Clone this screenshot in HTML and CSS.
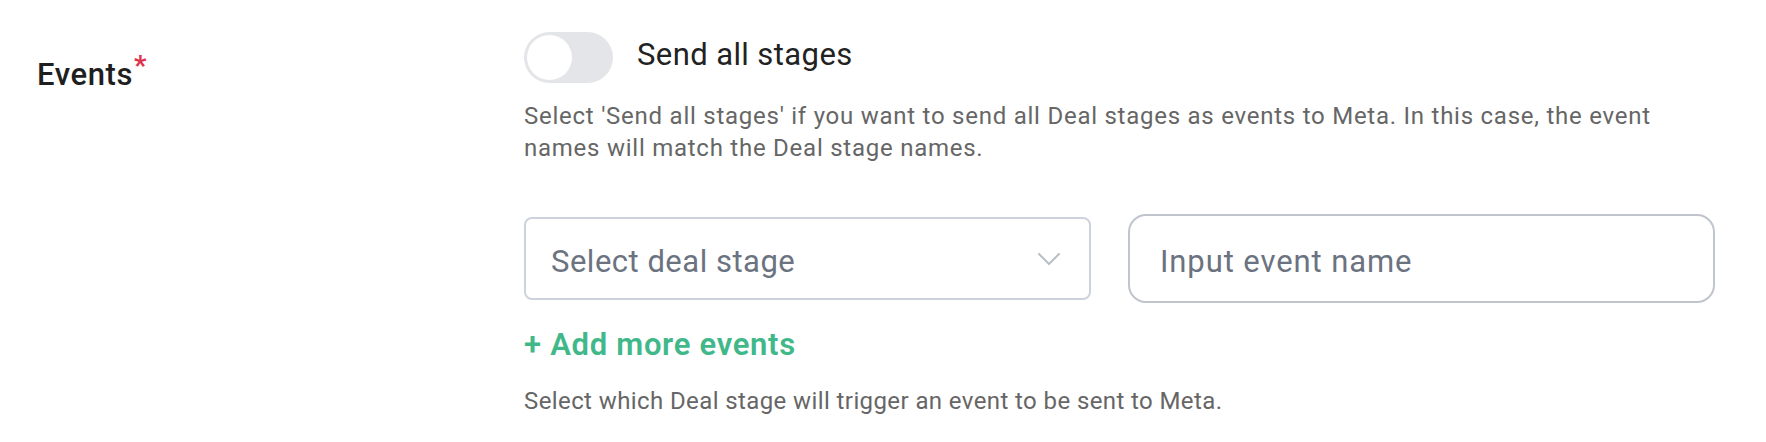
FILE: index.html
```html
<!DOCTYPE html>
<html lang="en">
<head>
    <meta charset="UTF-8">
    <meta name="viewport" content="width=device-width, initial-scale=1.0">
    <title>Events</title>
    <link rel="stylesheet" href="styles.css">
</head>
<body>
    <div class="field-row">
        <div class="field-label">
            Events<span class="required">*</span>
        </div>

        <div class="field-body">
            <label class="toggle-row">
                <span class="toggle"><span class="toggle-knob"></span></span>
                <span class="toggle-text">Send all stages</span>
            </label>

            <p class="help-text">
                Select 'Send all stages' if you want to send all Deal stages as events to Meta. In this case, the event names will match the Deal stage names.
            </p>

            <div class="event-row">
                <div class="select-box">
                    <span class="select-placeholder">Select deal stage</span>
                    <svg class="chevron" width="22" height="12" viewBox="0 0 22 12">
                        <polyline points="1,1 11,11 21,1" fill="none" stroke="#b9bfc7" stroke-width="2" stroke-linecap="round" stroke-linejoin="round"/>
                    </svg>
                </div>
                <input class="event-input" type="text" placeholder="Input event name">
            </div>

            <a class="add-more" href="#">+ Add more events</a>

            <p class="help-text bottom">Select which Deal stage will trigger an event to be sent to Meta.</p>
        </div>
    </div>
</body>
</html>
```

FILE: styles.css
```css
* {
    margin: 0;
    padding: 0;
    box-sizing: border-box;
}

body {
    font-family: Roboto, 'Noto Sans', Arial, sans-serif;
    background: #ffffff;
    color: #222222;
}

.field-row {
    display: flex;
    padding: 32px 0 0 37px;
}

.field-label {
    width: 487px;
    padding-top: 14px;
    font-size: 31px;
    line-height: 40px;
    font-weight: 500;
    letter-spacing: 0.6px;
    color: #1f1f1f;
}

.required {
    color: #e0304a;
    font-size: 28px;
    font-weight: 600;
    vertical-align: 10px;
    margin-left: 1px;
}

.field-body {
    width: 1191px;
}

.toggle-row {
    display: flex;
    align-items: center;
    gap: 24px;
    height: 51px;
}

.toggle {
    display: flex;
    align-items: center;
    width: 89px;
    height: 51px;
    padding: 3px;
    border-radius: 26px;
    background: #e3e5e8;
}

.toggle-knob {
    width: 45px;
    height: 45px;
    border-radius: 50%;
    background: #ffffff;
}

.toggle-text {
    font-size: 31px;
    line-height: 40px;
    letter-spacing: 0.4px;
    color: #222222;
    margin-top: -6px;
}

.help-text {
    margin-top: 17px;
    font-size: 24px;
    line-height: 32px;
    letter-spacing: 0.75px;
    color: #666666;
    max-width: 1180px;
}

.event-row {
    display: flex;
    align-items: center;
    gap: 37px;
    margin-top: 50px;
}

.select-box {
    display: flex;
    align-items: center;
    justify-content: space-between;
    width: 567px;
    height: 83px;
    padding: 5px 29px 0 25px;
    border: 2px solid #ccd3dc;
    border-radius: 8px;
}

.chevron {
    margin-top: -5px;
}

.select-placeholder {
    font-size: 31px;
    letter-spacing: 0.5px;
    color: #6b7280;
}

.event-input {
    width: 587px;
    height: 89px;
    padding: 5px 30px 0;
    border: 2px solid #c0c5cd;
    border-radius: 18px;
    font-family: inherit;
    font-size: 31px;
    letter-spacing: 0.9px;
    color: #333333;
    outline: none;
}

.event-input::placeholder {
    color: #6b7280;
}

.add-more {
    display: block;
    margin-top: 22px;
    font-size: 31px;
    line-height: 40px;
    font-weight: 600;
    letter-spacing: 0.7px;
    color: #41b88a;
    text-decoration: none;
}

.help-text.bottom {
    margin-top: 20px;
    letter-spacing: 0.4px;
}
```
